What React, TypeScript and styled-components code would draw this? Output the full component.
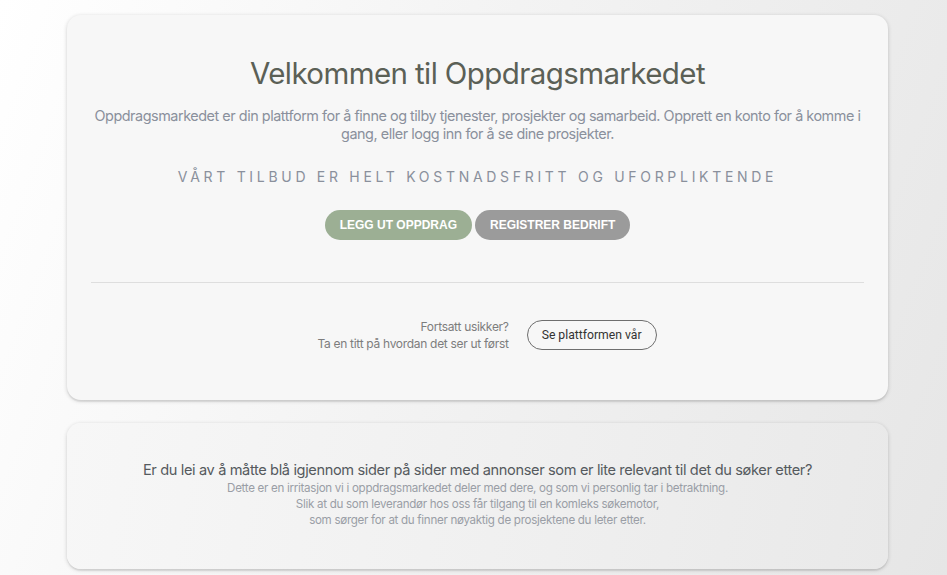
import React from "react";
import styled, { createGlobalStyle } from "styled-components";

const Global = createGlobalStyle`
  html, body { margin: 0; padding: 0; }
  body {
    min-height: 575px;
    background: linear-gradient(110deg, #ffffff 0%, #f3f3f3 45%, #e6e6e6 100%);
    font-family: Inter, "Noto Sans", sans-serif;
  }
`;

const Page = styled.main`
  padding: 15px 59px 0 67px;
  display: flex;
  flex-direction: column;
  gap: 23px;
`;

const Card = styled.section<{ $tone?: "plain" | "fade" }>`
  border-radius: 14px;
  background: ${(p) =>
    p.$tone === "fade"
      ? "linear-gradient(100deg, #f7f7f7 0%, #efefef 60%, #e9e9e9 100%)"
      : "#f7f7f7"};
  box-shadow: 0 1px 4px rgba(0, 0, 0, 0.18), 0 2px 1px rgba(0, 0, 0, 0.06);
  text-align: center;
`;

const Hero = styled.div`
  padding: 40px 24px 0;
  display: flex;
  flex-direction: column;
  align-items: center;
`;

const Title = styled.h1`
  margin: 0;
  font-size: 29.5px;
  font-weight: 400;
  line-height: 36px;
  color: #5b6056;
  letter-spacing: -0.6px;
`;

const Lead = styled.p`
  margin: 16px 0 0;
  font-size: 14.4px;
  line-height: 18px;
  color: #8a909c;
  letter-spacing: -0.46px;
`;

const Tagline = styled.p`
  margin: 25px 0 0;
  font-size: 14px;
  line-height: 18px;
  letter-spacing: 3.7px;
  color: #8a909c;
`;

const Actions = styled.div`
  margin-top: 24px;
  display: flex;
  gap: 3px;
`;

const Pill = styled.button<{ $variant: "green" | "gray" }>`
  height: 30px;
  padding: 0 15px;
  border: none;
  border-radius: 15px;
  background: ${(p) => (p.$variant === "green" ? "#9caf94" : "#9b9b9b")};
  color: #ffffff;
  font-family: "Liberation Sans", Arial, sans-serif;
  font-weight: 700;
  font-size: 12px;
  cursor: pointer;
`;

const Divider = styled.hr`
  margin: 42px 24px 0;
  border: none;
  border-top: 1px solid #dedede;
`;

const Explore = styled.div`
  padding: 35px 0 48px 19px;
  display: flex;
  justify-content: center;
  align-items: center;
  gap: 18px;
`;

const ExploreText = styled.div`
  text-align: right;
  font-size: 12px;
  line-height: 17px;
  letter-spacing: -0.3px;
  color: #7d7d7d;
`;

const OutlineButton = styled.button`
  height: 30px;
  padding: 0 14px;
  border: 1px solid #6e6e6e;
  border-radius: 15px;
  background: transparent;
  color: #333;
  font-family: Roboto, "Liberation Sans", sans-serif;
  font-size: 12.2px;
  cursor: pointer;
`;

const Info = styled.div`
  padding: 37px 24px 41px;
`;

const InfoTitle = styled.h2`
  margin: 0;
  font-size: 14.6px;
  font-weight: 400;
  line-height: 20px;
  letter-spacing: -0.37px;
  color: #555a5e;
`;

const InfoText = styled.p`
  margin: 0;
  font-size: 11.6px;
  line-height: 16px;
  letter-spacing: -0.3px;
  color: #9a9ea6;
`;

export default function App() {
  return (
    <>
      <Global />
      <Page>
        <Card>
          <Hero>
            <Title>Velkommen til Oppdragsmarkedet</Title>
            <Lead>
              Oppdragsmarkedet er din plattform for å finne og tilby tjenester, prosjekter og
              samarbeid. Opprett en konto for å komme i gang, eller logg inn for å se dine
              prosjekter.
            </Lead>
            <Tagline>VÅRT TILBUD ER HELT KOSTNADSFRITT OG UFORPLIKTENDE</Tagline>
            <Actions>
              <Pill $variant="green">LEGG UT OPPDRAG</Pill>
              <Pill $variant="gray">REGISTRER BEDRIFT</Pill>
            </Actions>
          </Hero>
          <Divider />
          <Explore>
            <ExploreText>
              Fortsatt usikker?
              <br />
              Ta en titt på hvordan det ser ut først
            </ExploreText>
            <OutlineButton>Se plattformen vår</OutlineButton>
          </Explore>
        </Card>
        <Card $tone="fade">
          <Info>
            <InfoTitle>
              Er du lei av å måtte blå igjennom sider på sider med annonser som er lite relevant til
              det du søker etter?
            </InfoTitle>
            <InfoText>
              Dette er en irritasjon vi i oppdragsmarkedet deler med dere, og som vi personlig tar i
              betraktning.
              <br />
              Slik at du som leverandør hos oss får tilgang til en komleks søkemotor,
              <br />
              som sørger for at du finner nøyaktig de prosjektene du leter etter.
            </InfoText>
          </Info>
        </Card>
      </Page>
    </>
  );
}
